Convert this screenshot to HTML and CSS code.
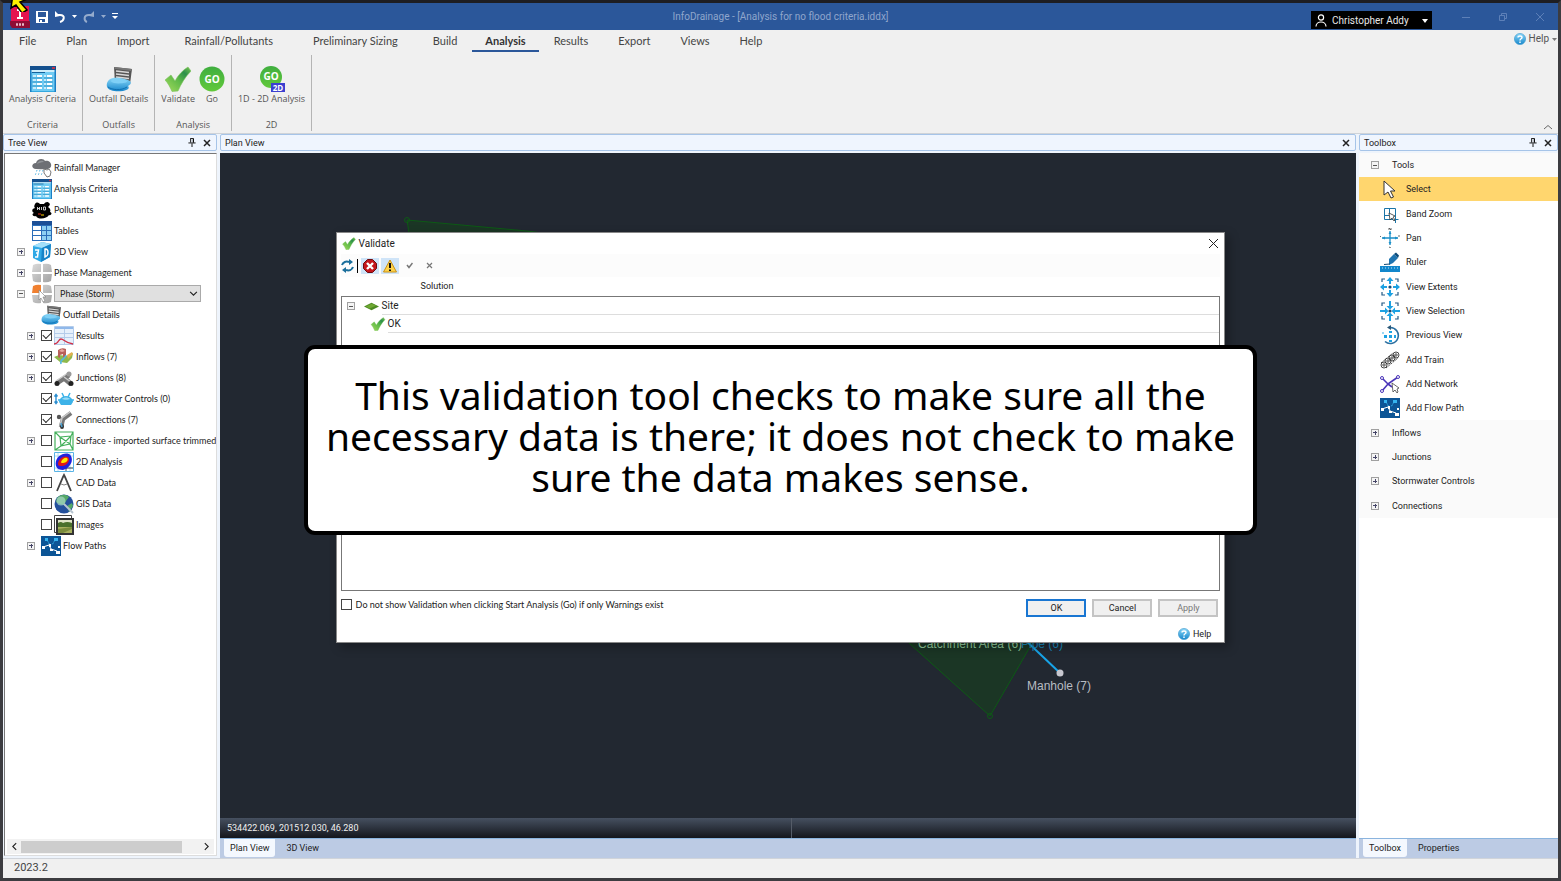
FILE: index.html
```
<!DOCTYPE html>
<html lang="en">
<head>
<meta charset="utf-8">
<title>InfoDrainage - [Analysis for no flood criteria.iddx]</title>
<link rel="stylesheet" href="styles.css">
</head>
<body>
<svg class="defs" aria-hidden="true">
  <defs>
    <linearGradient id="gCheck" x1="0" y1="1" x2="1" y2="0"><stop offset="0" stop-color="#a4dc5c"/><stop offset=".5" stop-color="#5cb848"/><stop offset=".75" stop-color="#2c8f4a"/><stop offset="1" stop-color="#7cc850"/></linearGradient>
    <linearGradient id="gGo" x1="0" y1="0" x2="0" y2="1"><stop offset="0" stop-color="#3fae3f"/><stop offset="1" stop-color="#62c93b"/></linearGradient>
    <linearGradient id="gBlue" x1="0" y1="0" x2="0" y2="1"><stop offset="0" stop-color="#8ad7f8"/><stop offset="1" stop-color="#1787cc"/></linearGradient>
    <linearGradient id="gGrey" x1="0" y1="0" x2="1" y2="1"><stop offset="0" stop-color="#dadada"/><stop offset="1" stop-color="#a2a2a2"/></linearGradient>
  </defs>
  <symbol id="i-criteria" viewBox="0 0 26 26"><path fill="#35a9e0" d="M0 0h26v26H0z"/><path fill="#cfeefb" d="M1 4h24v2H1z"/><path fill="#14508e" d="M0 0h26v4H0z"/><path fill="#b8344e" d="M22 1h3v2h-3z"/><path fill="#6fcbf3" d="M1 6h24v19H1z"/><path stroke="#14629c" d="M2 6.500h13"/><path fill="#fff" d="M7 9h5v2H7zm0 4h5v2H7zm0 4h5v2H7zm0 4h5v2H7zM17 9h5v2h-5zm0 4h5v2h-5zm0 4h5v2h-5zm0 4h5v2h-5z"/><path fill="#c8ecfb" d="M3 9h3v2H3zm0 4h3v2H3zm0 4h3v2H3zm0 4h3v2H3zM14 9h2v2h-2zm0 4h2v2h-2zm0 4h2v2h-2zm0 4h2v2h-2z"/><path stroke="#2389bd" stroke-width=".8" d="M2 12h10M2 16h10M2 20h10m2-8h9m-9 4h9m-9 4h9"/><path fill="#1b7fc4" d="M0 4h1.500v22H0zm24.500 0H26v22h-1.500z"/></symbol>
  <symbol id="i-outfall" viewBox="0 0 26 26"><path fill="#555" d="m8 1 18 2-2 15H9z"/><path fill="#777" d="m8 1 18 2-1 2L9 3z"/><path stroke="#d8d8d8" stroke-width="1.500" d="m10 5 13 1.500M10 8l13 1.500M10 11l13 1.500"/><path fill="url(#gBlue)" d="M7 12c4-1 14 1 17 3 2 2 0 4-2 5 2 2 0 4-5 5-7 1-14 0-16-4-1-4 1-8 6-9z"/><path fill="#7fd0f6" d="M8 13c4-1 10 0 13 2 1 2-8 3-13 2-4-1-4-3 0-4z"/><path stroke="#0f6fb0" fill="none" d="M2 21c4 3 13 4 19 0"/></symbol>
  <symbol id="i-check" viewBox="0 0 26 26"><path fill="url(#gCheck)" stroke="#7cc35a" stroke-width=".6" d="M0 14 6 9l4 6C13 9 18 4 23 1l3 4C20 11 16 18 13 25l-6 .5C5 21 3 17 0 14z"/></symbol>
  <symbol id="i-rain" viewBox="0 0 20 20"><path fill="#6d6f74" d="M4 11c-5 0-5-6 0-6 1-5 8-5 9-2 5-1 8 4 5 7-2 2-8 1-14 1z"/><path fill="#909398" d="M5 6c1-4 6-4 7-2-3 0-5 1-7 2z"/><path stroke="#58b4e0" stroke-dasharray="1.500 2" d="m5 12-2 6m5-6-2 6m5-6-2 6"/><path fill="#fff" stroke="#777" d="m12 11 3 1 2-1 2 3-1 4-3 1-3-4z"/></symbol>
  <symbol id="i-bug" viewBox="0 0 20 20"><path d="M3 4c2-3 4-1 5 0h4c1-2 4-3 5-1 2 1 0 3-1 4 2 1 3 3 2 5 3 1 1 4-1 3-2 4-11 5-13 1-3 1-5-2-2-3-2-1-3-4 1-5-1-1-1-2 0-4z"/><path stroke="#ddd" stroke-width=".9" fill="none" d="M5.500 7v3m2-3v3m-2-1.500h2m2-1.500v3m2-3h2v3h-2z"/><path stroke="#e03020" d="M6 14h3"/><path stroke="#ffd000" d="M9 15h3"/></symbol>
  <symbol id="i-table" viewBox="0 0 20 20"><path fill="#2a6db8" d="M0 0h20v20H0z"/><path fill="#1c4f96" d="M0 0h20v4H0z"/><path fill="#fff" d="M1 5h8v4H1zm0 5h8v4H1zm0 5h8v4H1z"/><path fill="#8ecff2" d="M10 5h4v4h-4zm5 0h4v4h-4zm-5 5h4v4h-4zm5 0h4v4h-4zm-5 5h4v4h-4zm5 0h4v4h-4z"/></symbol>
  <symbol id="i-3d" viewBox="0 0 20 20"><path fill="#2fa9e6" d="m1 4 9-4 9 2-1 13-9 5-8-4z"/><path fill="#a4e0fa" d="m1 4 9-4 9 2-9 4z"/><path fill="#1784c8" d="m10 6 9-4-1 13-9 5z"/><path stroke="#fff" stroke-width="1.500" fill="none" d="M3 8h3.500L6 11H4h2l-.5 4H3m10-8v8c4-1 4-9 0-8z"/></symbol>
  <symbol id="i-phase" viewBox="0 0 20 20"><path fill="url(#gGrey)" d="M1 2q4-2 8-1v8H0zm10-1q5-1 8 1l1 7h-9zM0 11h9v8q-5 1-8-1zm11 0h9l-1 7q-4 2-8 1z"/></symbol>
  <symbol id="i-phase-on" viewBox="0 0 20 20"><path fill="url(#gGrey)" d="M11 1q5-1 8 1l1 7h-9zM0 11h9v8q-5 1-8-1zm11 0h9l-1 7q-4 2-8 1z"/><path fill="#f08030" d="M1 2q4-2 8-1v8H0z"/><path fill="#fff" stroke="#888" stroke-width=".7" d="M7 6v10l2-2 2 4 2-1-2-4h3z"/></symbol>
  <symbol id="i-results" viewBox="0 0 20 20"><path fill="#e6f0fb" stroke="#b4ccea" d="M.5.500h19v18H.500z"/><path fill="#8fb8ea" d="M1 1h18v2H1z"/><path stroke="#b4ccea" d="M1 7.500h18M1 11.500h18M10.500 3v15"/><path stroke="#d03048" stroke-width="1.300" fill="none" d="M0 18c5 0 4-5 7-5s4 4 12 5"/></symbol>
  <symbol id="i-inflows" viewBox="0 0 20 20"><path fill="#8fb84c" d="m0 10 5-2 8 1 6-3-1 5-5 5-7-1z"/><path fill="#e0b050" d="m13 8 5-3 1 2-5 5z"/><path fill="#b8605a" d="M4 3q4-3 8-1v8l-3 1V7L6 8v3l-2-1z"/><path fill="#e9a7a0" d="m5 4 3-2 3 2-3 1z"/><path stroke="#58b8e0" stroke-width="1.600" fill="none" d="M7 17q-1-3 2-5t3-4"/></symbol>
  <symbol id="i-junction" viewBox="0 0 20 20"><path stroke="#777" stroke-width="5" d="m3 15 12-8M9 9l8 7"/><path stroke="#ccc" stroke-width="1.500" d="m2 13 12-8m-4 4 7 5"/><circle cx="3" cy="15.500" r="2.500" fill="#222"/><circle cx="17" cy="15.500" r="2.500" fill="#222"/><circle cx="15" cy="6" r="2.500" fill="#999"/></symbol>
  <symbol id="i-storm" viewBox="0 0 20 20"><path stroke="#2b8ed0" stroke-width="1.400" d="M2 6v8M.500 7.500 2 5.500l1.500 2M.500 12.500l1.500 2 1.500-2" fill="none"/><path fill="#3db2e8" d="M5 13c0-3 3-6 7-6s7 3 7 6l-2 3H7z"/><path fill="#9bdcf6" d="M8 10c2-2 6-2 8 0-2 1-6 1-8 0z"/><path stroke="#3db2e8" stroke-width="1.500" d="m8 4 2 4m6-4-2 4M4 11h3m10 0h3"/></symbol>
  <symbol id="i-connection" viewBox="0 0 20 20"><path stroke="#777" stroke-width="4.500" fill="none" d="m7 17 2-8 8-6"/><path stroke="#c8c8c8" stroke-width="1.500" fill="none" d="m6 16 2-8 8-6"/><circle cx="5" cy="7" r="2.200" fill="#555"/><ellipse cx="8" cy="16.500" rx="2" ry="2.500" fill="#333"/><path stroke="#4aa0d0" stroke-width="1.500" d="m7 13 1 4"/></symbol>
  <symbol id="i-surface" viewBox="0 0 20 20"><path fill="#fff" stroke="#45b05c" stroke-width="1.200" d="M1 1h18v18H1zM1 1l5 5 1 9-6 4M6 6l11-1 2-4M7 15l9-2 3 6M17 5l-1 8M6 6l10 7M7 15 17 5"/></symbol>
  <symbol id="i-2d" viewBox="0 0 20 20"><path fill="#fff" stroke="#59b4e6" d="M.5.500h19v19H.500z"/><path stroke="#9fd0ee" stroke-width=".8" d="M4 1v18M1 4h18M16 1v18M1 16h18"/><path stroke="#222" stroke-width=".8" d="M12 12v7m0-3h7"/><path fill="#2121dd" d="M2 14C0 6 8 0 15 2c6 4 2 14-6 16-3 0-6-1-7-4z"/><path fill="#e01818" d="M4 12c0-5 6-9 10-7 3 3-1 9-6 9-2 0-4 0-4-2z"/><path fill="#ffe800" d="M7 10c1-3 4-5 6-4 2 2-1 5-4 5-1 0-2 0-2-1z"/></symbol>
  <symbol id="i-cad" viewBox="0 0 20 20"><path stroke="#444" stroke-width="1.800" fill="none" d="M3 18 9 4l1-2 1 2 6 14"/><path stroke="#777" stroke-width=".9" d="m7 11 3 1 3-1" fill="none"/></symbol>
  <symbol id="i-gis" viewBox="0 0 20 20"><circle cx="10" cy="10" r="9.500" fill="#24509c"/><path fill="#55a868" d="M3 4c4-4 9-4 12-1l-3 4-2 4-4-1-4-2zM13 12l5-3 1 3-4 6z"/><circle cx="7" cy="7" r="4.500" fill="#a9d8c8" opacity=".7"/><path stroke="#b5c3cf" stroke-width="2" d="m10 10 9 9"/></symbol>
  <symbol id="i-images" viewBox="0 0 20 20"><path fill="#fff" stroke="#444" d="M.500.500h17v17H.500z"/><path fill="#333" d="M2 3h18v17H2z"/><path fill="#dfe4c8" d="M4 5h14v13H4z"/><path fill="#49702c" d="M4 8q3-2 5 0 4-2 9 0v4H4z"/><path fill="#a8b060" d="M4 12h14v6H4z"/><path fill="#7a8c3c" d="m4 14 14-2v2l-9 4H4z"/></symbol>
  <symbol id="i-flow" viewBox="0 0 20 20"><path fill="#0c5596" d="M0 0h20v20H0z"/><path fill="#35b4f0" d="M4 2h3v3H4zm9 0h4v3h-4z"/><path stroke="#35b4f0" stroke-dasharray="2 1" d="m6 4 3 5m5-5-3 5"/><path stroke="#fff" fill="none" d="m2 11 6-2 2 4 6 2"/><path fill="#fff" d="M1 10h3v3H1zm7-2h2v3H8zm1 5h3v2H9zm6 2h4v3h-4zm2-5h2v2h-2z"/></symbol>
  <symbol id="i-select" viewBox="0 0 20 20"><path fill="#fff" stroke="#333" d="M4 2v14l4-3 3 6 2.500-1-3-6H15z"/></symbol>
  <symbol id="i-band" viewBox="0 0 20 20"><path fill="none" stroke="#1b75a8" d="M4.500 4.500h11v11h-11zM9.500 4.500v7h-5"/><path stroke="#1b75a8" d="M15.500 12v7m-3-3.500h6"/><path fill="#fff" stroke="#333" stroke-width=".8" d="m9 9 1 7 2-2 2 3 1-1-2-3 2-1z"/></symbol>
  <symbol id="i-pan" viewBox="0 0 20 20"><path stroke="#1b8fc8" stroke-width="1.300" d="M2 10h16M10 3v14" fill="none"/><path fill="#1b8fc8" d="m2 10 3-1.500v3zm16 0-3-1.500v3zM10 3.500 8.500 6h3zm0 13L8.500 14h3z"/><path stroke="#444" stroke-width=".8" fill="none" d="M9 2V0l2 2V0M9 19l2 1M0 8l1 1m17-1h2"/></symbol>
  <symbol id="i-ruler" viewBox="0 0 20 20"><path fill="#1287cc" d="M0 14h20v6H0z"/><path stroke="#bde5f9" d="M2 16h16" stroke-dasharray="1 2"/><path fill="#1f74b0" d="m9 7 5-5 4 4-5 5-4 2z"/><path fill="#0e4a78" d="m14 2 2-1.500 3 3L18 6z"/><path stroke="#134a73" d="m4 12.500 6-.5"/></symbol>
  <symbol id="i-extents" viewBox="0 0 20 20"><path fill="none" stroke="#245a86" stroke-width="1.200" d="M2 5V2h3m10 0h3v3m0 10v3h-3M5 18H2v-3"/><path fill="#1da1e2" d="m0 10 4-3.500v2.500h3v2H4v2.500zm20 0-4-3.500v2.500h-3v2h3v2.500zM10 0 6.500 4H9v3h2V4h2.500zm0 20-3.500-4H9v-3h2v3h2.500z"/><circle cx="10" cy="10" r="1.600" fill="#174d78"/></symbol>
  <symbol id="i-selection" viewBox="0 0 20 20"><path fill="none" stroke="#245a86" stroke-width="1.200" d="M2 5V2h3m10 0h3v3m0 10v3h-3M5 18H2v-3"/><path fill="#1da1e2" d="M8.500 10 5 6.500V9H0v2h5v2.500zm3 0L15 6.500V9h5v2h-5v2.500zM10 8.500 6.500 5H9V0h2v5h2.500zm0 3L6.500 15H9v5h2v-5h2.500z"/><circle cx="10" cy="10" r="1.600" fill="#174d78"/></symbol>
  <symbol id="i-previous" viewBox="0 0 20 20"><path fill="none" stroke="#2b6fa0" stroke-width="1.600" d="M10 2.500a8 8 0 1 1-5 14"/><path fill="#2b5878" d="m7 2.500 4-2.500v5z"/><path fill="#1da1e2" d="M9 6h3v2H9zm0 4h3v3H9zm0 5h3v2H9zM4 10h3v3H4zm10 0h2v3h-2z"/><path fill="#9bd7f4" d="M2 7h2v2H2z"/></symbol>
  <symbol id="i-train" viewBox="0 0 20 20"><g fill="none" stroke="#333" stroke-width=".9"><circle cx="4" cy="15" r="3"/><circle cx="4" cy="15" r="1.200"/><circle cx="8" cy="11" r="3"/><circle cx="8" cy="11" r="1.200"/><circle cx="12" cy="8" r="3"/><circle cx="12" cy="8" r="1.200"/><circle cx="16" cy="5" r="3"/><circle cx="16" cy="5" r="1.200"/><path stroke-dasharray="2 1" d="m6 18 12-10M1 13 13 3"/></g></symbol>
  <symbol id="i-network" viewBox="0 0 20 20"><path stroke="#4a35b8" stroke-width="1.600" fill="none" d="m2 4 6 6 10-7M8 10l-6 7m6-7 4 3"/><g fill="#fff" stroke="#4a35b8"><circle cx="2" cy="4" r="1.500"/><circle cx="2" cy="17" r="1.500"/><circle cx="18" cy="3" r="1.500"/></g><path fill="#fff" stroke="#444" stroke-width=".8" d="m12 9 1 9 2-2 2 3 1-1-1-3 2-1z"/></symbol>
  <symbol id="i-pin" viewBox="0 0 8 10"><path stroke="#000" fill="none" d="M2.500 1v4m3-4v4M2 .500h4M0 5.500h8M4 6v4"/><path d="M5 1h1v4H5z"/></symbol>
  <symbol id="i-x" viewBox="0 0 8 8"><path stroke="currentColor" stroke-width="1.500" d="m1 1 6 6m0-6L1 7"/></symbol>
  <symbol id="i-chev" viewBox="0 0 8 8"><path stroke="currentColor" fill="none" d="m1 2.500 3 3 3-3"/></symbol>
  <symbol id="i-help" viewBox="0 0 12 12"><circle cx="6" cy="6" r="5.600" fill="url(#gBlue)" stroke="#3a98cc" stroke-width=".6"/><path stroke="#fff" stroke-width="1.400" fill="none" d="M4 4.500c0-2 4-2 4 0C8 6 6 5.500 6 7.500M6 8.500V10"/></symbol>
</svg>

<div class="app">
  <header class="titlebar">
    <div class="quick">
      <svg class="logo" viewBox="0 0 20 22"><path fill="#e5134f" d="M1 0h18v16H1z"/><path fill="#8f0d35" d="M0 15h20v7H2l-2-3z"/><path fill="#fff" d="M7 3h6v2h-2v6h2v2H7v-2h2V5H7z"/><path stroke="#e8b8c6" stroke-width="2.500" stroke-dasharray="2 1" d="M6 18.500h8"/></svg>
      <button aria-label="Save"><svg width="12" height="12" viewBox="0 0 12 12"><path fill="#fff" d="M0 0h12v12H0z"/><path fill="#2b579a" d="M2 1h8v5H2zM3 8h6v3H3z"/><path fill="#fff" d="M4 9h2v2H4z"/></svg></button>
      <button aria-label="Undo"><svg width="12" height="12" viewBox="0 0 12 12"><path stroke="#fff" stroke-width="2" fill="none" d="M3 4h3c6 0 4 6 0 7"/><path fill="#fff" d="M1 6V0l5 5z"/></svg></button>
      <button aria-label="Undo list"><svg width="5" height="4" viewBox="0 0 5 4"><path fill="#fff" d="M0 0h5L2.500 3z"/></svg></button>
      <button aria-label="Redo" class="dim"><svg width="12" height="12" viewBox="0 0 12 12"><path stroke="#fff" stroke-width="2" fill="none" d="M9 4H6C0 4 1 10 4 11"/><path fill="#fff" d="M11 6V0L6 5z"/></svg></button>
      <button aria-label="Redo list" class="dim"><svg width="5" height="4" viewBox="0 0 5 4"><path fill="#fff" d="M0 0h5L2.500 3z"/></svg></button>
      <button aria-label="Customize toolbar"><svg width="6" height="7" viewBox="0 0 6 7"><path fill="#fff" d="M0 0h6v1H0zm0 3h6L3 6z"/></svg></button>
    </div>
    <h1>InfoDrainage - [Analysis for no flood criteria.iddx]</h1>
    <div class="window-side">
      <button class="user"><svg width="12" height="13" viewBox="0 0 12 13"><g fill="none" stroke="#fff" stroke-width="1.200"><circle cx="6" cy="3.500" r="2.600"/><path d="M1 12.500C1 6.500 11 6.500 11 12.500"/></g></svg><span>Christopher Addy</span><svg width="6" height="4" viewBox="0 0 6 4"><path fill="#fff" d="M0 0h6L3 4z"/></svg></button>
      <div class="winbtns">
        <button aria-label="Minimize"><svg width="10" height="10" viewBox="0 0 10 10"><path stroke="#5d80b8" d="M1 5.500h8"/></svg></button>
        <button aria-label="Restore"><svg width="10" height="10" viewBox="0 0 10 10"><path stroke="#5d80b8" fill="none" d="M1.500 3.500h5v5h-5zM3.500 3V1.500h5v5H7"/></svg></button>
        <button aria-label="Close"><svg width="10" height="10" viewBox="0 0 10 10"><path stroke="#5d80b8" d="m1 1 8 8m0-8L1 9"/></svg></button>
      </div>
    </div>
  </header>

  <div class="menurow">
    <nav class="menu">
      <button>File</button><button>Plan</button><button>Import</button><button class="wide">Rainfall/Pollutants</button><button class="wide">Preliminary Sizing</button><button>Build</button><button class="active">Analysis</button><button>Results</button><button>Export</button><button>Views</button><button>Help</button>
    </nav>
    <button class="help"><svg width="12" height="12"><use href="#i-help"/></svg>Help<svg width="5" height="3" viewBox="0 0 5 3"><path fill="#777" d="M0 0h5L2.500 3z"/></svg></button>
  </div>

  <section class="ribbon">
    <div class="group"><div class="tools"><button><svg><use href="#i-criteria"/></svg>Analysis Criteria</button></div><h2>Criteria</h2></div>
    <div class="group"><div class="tools"><button><svg><use href="#i-outfall"/></svg>Outfall Details</button></div><h2>Outfalls</h2></div>
    <div class="group"><div class="tools"><button><svg><use href="#i-check"/></svg>Validate</button><button><svg viewBox="0 0 26 26"><circle cx="13" cy="13" r="12.500" fill="url(#gGo)"/><text x="13" y="17" class="glyph-go">GO</text></svg>Go</button></div><h2>Analysis</h2></div>
    <div class="group"><div class="tools"><button><svg viewBox="0 0 26 26"><circle cx="12" cy="11" r="11" fill="url(#gGo)"/><text x="12" y="14" class="glyph-go">GO</text><path fill="#3b3fd0" d="M12 17h14v9H12z"/><text x="19" y="25" class="glyph-2d">2D</text></svg>1D - 2D Analysis</button></div><h2>2D</h2></div>
    <button class="collapse" aria-label="Collapse ribbon"><svg width="10" height="6" viewBox="0 0 10 6"><path stroke="#666" fill="none" d="m1 5 4-3.500L9 5"/></svg></button>
  </section>

  <main class="work">
    <section class="panel tree-panel">
      <header class="panel-head"><h2>Tree View</h2><button aria-label="Pin"><svg width="8" height="9"><use href="#i-pin"/></svg></button><button aria-label="Close"><svg width="8" height="8"><use href="#i-x"/></svg></button></header>
      <div class="tree-body">
        <ul class="tree">
          <li><i class="exp none"></i><svg><use href="#i-rain"/></svg>Rainfall Manager</li>
          <li><i class="exp none"></i><svg><use href="#i-criteria"/></svg>Analysis Criteria</li>
          <li><i class="exp none"></i><svg><use href="#i-bug"/></svg>Pollutants</li>
          <li><i class="exp none"></i><svg><use href="#i-table"/></svg>Tables</li>
          <li><i class="exp plus"></i><svg><use href="#i-3d"/></svg>3D View</li>
          <li><i class="exp plus"></i><svg><use href="#i-phase"/></svg>Phase Management</li>
          <li><i class="exp"></i><svg><use href="#i-phase-on"/></svg><span class="combo"><select aria-label="Phase"><option>Phase (Storm)</option></select><svg><use href="#i-chev"/></svg></span></li>
          <li class="sub"><i class="exp none"></i><svg><use href="#i-outfall"/></svg>Outfall Details</li>
          <li class="sub"><i class="exp plus"></i><label><input type="checkbox" checked><svg><use href="#i-results"/></svg>Results</label></li>
          <li class="sub"><i class="exp plus"></i><label><input type="checkbox" checked><svg><use href="#i-inflows"/></svg>Inflows (7)</label></li>
          <li class="sub"><i class="exp plus"></i><label><input type="checkbox" checked><svg><use href="#i-junction"/></svg>Junctions (8)</label></li>
          <li class="sub"><i class="exp none"></i><label><input type="checkbox" checked><svg><use href="#i-storm"/></svg>Stormwater Controls (0)</label></li>
          <li class="sub"><i class="exp none"></i><label><input type="checkbox" checked><svg><use href="#i-connection"/></svg>Connections (7)</label></li>
          <li class="sub"><i class="exp plus"></i><label><input type="checkbox"><svg><use href="#i-surface"/></svg>Surface - imported surface trimmed</label></li>
          <li class="sub"><i class="exp none"></i><label><input type="checkbox"><svg><use href="#i-2d"/></svg>2D Analysis</label></li>
          <li class="sub"><i class="exp plus"></i><label><input type="checkbox"><svg><use href="#i-cad"/></svg>CAD Data</label></li>
          <li class="sub"><i class="exp none"></i><label><input type="checkbox"><svg><use href="#i-gis"/></svg>GIS Data</label></li>
          <li class="sub"><i class="exp none"></i><label><input type="checkbox"><svg><use href="#i-images"/></svg>Images</label></li>
          <li class="sub"><i class="exp plus"></i><svg><use href="#i-flow"/></svg>Flow Paths</li>
        </ul>
        <div class="hscroll"><svg class="left"><use href="#i-chev"/></svg><div class="track"><div class="thumb"></div></div><svg class="right"><use href="#i-chev"/></svg></div>
      </div>
    </section>

    <section class="panel plan-panel">
      <header class="panel-head"><h2>Plan View</h2><button aria-label="Close"><svg width="8" height="8"><use href="#i-x"/></svg></button></header>
      <div class="canvas">
        <svg viewBox="0 0 1136 665" preserveAspectRatio="xMinYMin slice">
          <path fill="#1b3625" stroke="#0d5a15" d="m187 67 120 11 300 40-400 80z"/>
          <circle cx="187" cy="67" r="2.500" fill="none" stroke="#0d5a15"/>
          <path fill="#1b3625" stroke="#0d5a15" d="m670 473 100 90 44-76 30-60z"/>
          <circle cx="770" cy="563" r="2.500" fill="none" stroke="#0d5a15"/>
          <path stroke="#18a4e8" stroke-width="2" d="m800 482 40 38"/>
          <circle cx="840" cy="520" r="3.500" fill="#c8c8d0"/>
          <text x="698" y="495" class="lbl-area">Catchment Area (6)</text>
          <text x="801" y="495" class="lbl-pipe">Pipe (6)</text>
          <text x="807" y="537" class="lbl-node">Manhole (7)</text>
        </svg>
      </div>
      <div class="coords"><span>534422.069, 201512.030, 46.280</span></div>
      <div class="doctabs"><button class="active">Plan View</button><button>3D View</button></div>
    </section>

    <section class="panel toolbox-panel">
      <header class="panel-head"><h2>Toolbox</h2><button aria-label="Pin"><svg width="8" height="9"><use href="#i-pin"/></svg></button><button aria-label="Close"><svg width="8" height="8"><use href="#i-x"/></svg></button></header>
      <ul class="toolbox">
        <li class="cat"><button><i class="exp"></i>Tools</button></li>
        <li class="on"><button><svg><use href="#i-select"/></svg>Select</button></li>
        <li><button><svg><use href="#i-band"/></svg>Band Zoom</button></li>
        <li><button><svg><use href="#i-pan"/></svg>Pan</button></li>
        <li><button><svg><use href="#i-ruler"/></svg>Ruler</button></li>
        <li><button><svg><use href="#i-extents"/></svg>View Extents</button></li>
        <li><button><svg><use href="#i-selection"/></svg>View Selection</button></li>
        <li><button><svg><use href="#i-previous"/></svg>Previous View</button></li>
        <li><button><svg><use href="#i-train"/></svg>Add Train</button></li>
        <li><button><svg><use href="#i-network"/></svg>Add Network</button></li>
        <li><button><svg><use href="#i-flow"/></svg>Add Flow Path</button></li>
        <li class="cat"><button><i class="exp plus"></i>Inflows</button></li>
        <li class="cat"><button><i class="exp plus"></i>Junctions</button></li>
        <li class="cat"><button><i class="exp plus"></i>Stormwater Controls</button></li>
        <li class="cat"><button><i class="exp plus"></i>Connections</button></li>
      </ul>
      <div class="doctabs"><button class="active">Toolbox</button><button>Properties</button></div>
    </section>
  </main>

  <footer class="status">2023.2</footer>
</div>

<div class="overlay">
  <div class="dialog" role="dialog" aria-labelledby="dlg-title">
    <header><svg><use href="#i-check"/></svg><h2 id="dlg-title">Validate</h2><button aria-label="Close"><svg width="9" height="9" viewBox="0 0 9 9"><path stroke="#222" d="m0 0 9 9m0-9L0 9"/></svg></button></header>
    <div class="dlg-tools">
      <button aria-label="Refresh"><svg width="13" height="14" viewBox="0 0 13 14"><g fill="none" stroke="#1b6f9c" stroke-width="2"><path d="M1 6c1-3 4-4 7-3M12 8c-1 3-4 4-7 3"/></g><path fill="#1b6f9c" d="m8 0 4 3-4 3zM5 14l-4-3 4-3z"/></svg></button>
      <span class="bar"></span>
      <button class="lit" aria-label="Errors"><svg width="14" height="14" viewBox="0 0 14 14"><path fill="#c4161c" stroke="#6e0c10" d="M4.500.500h5l4 4v5l-4 4h-5l-4-4v-5z"/><path stroke="#fff" stroke-width="2.400" d="m4 4 6 6m0-6-6 6"/></svg></button>
      <button class="lit" aria-label="Warnings"><svg width="14" height="14" viewBox="0 0 14 14"><path fill="#ffd34a" stroke="#c89018" stroke-linejoin="round" d="m7 1 6.500 12H.500z"/><path stroke="#111" stroke-width="2" d="M7 4v5m0 1.500v1.500"/></svg></button>
      <button aria-label="Accept"><svg width="7" height="7" viewBox="0 0 7 7"><path stroke="#777" stroke-width="1.500" fill="none" d="m1 3 2 2.500L6.500 1"/></svg></button>
      <button aria-label="Reject"><svg width="7" height="7" viewBox="0 0 7 7"><path stroke="#777" stroke-width="1.200" d="m1 1 5 5m0-5L1 6"/></svg></button>
    </div>
    <div class="col-head">Solution</div>
    <ul class="solutions">
      <li><i class="exp"></i><svg class="site" viewBox="0 0 16 8"><path fill="#4c8a22" d="M0 4 8 0l8 4-8 4z"/><path fill="#6fa832" d="m2 4 6-3 5 2-7 3z"/></svg><span>Site</span></li>
      <li class="child"><svg class="tick"><use href="#i-check"/></svg><span>OK</span></li>
    </ul>
    <div class="dlg-foot">
      <label><input type="checkbox">Do not show Validation when clicking Start Analysis (Go) if only Warnings exist</label>
      <div class="actions"><button class="primary">OK</button><button>Cancel</button><button disabled>Apply</button></div>
    </div>
    <button class="dlg-help"><svg width="12" height="12"><use href="#i-help"/></svg>Help</button>
  </div>
</div>
<div class="overlay">
  <p class="callout">This validation tool checks to make sure all the necessary data is there; it does not check to make sure the data makes sense.</p>
</div>
<svg class="pointer" width="26" height="12" viewBox="0 0 26 12"><path fill="#fff200" stroke="#000" stroke-width="1.500" d="M11-6 9 8l5-3 6 8 5-3-7-8 5-2z"/></svg>
</body>
</html>
```
FILE: styles.css
```
* { box-sizing: border-box; }
html, body { height: 100%; margin: 0; }
body { font-family: Roboto, "Noto Sans", sans-serif; font-size: 9px; line-height: 12px; color: #222; overflow: hidden; }
button { font: inherit; color: inherit; background: none; border: 0; padding: 0; display: flex; align-items: center; white-space: nowrap; }
h1, h2, p, ul { margin: 0; padding: 0; font-size: inherit; font-weight: normal; list-style: none; }
svg { display: block; flex: none; }
.defs { position: absolute; width: 0; height: 0; }
.app { height: 100vh; display: flex; flex-direction: column; border: 3px solid #3c3c40; border-top-color: #1e1e22; background: #f0f0f0; }

.glyph-go { font: bold 10px "Open Sans", sans-serif; fill: #fff; text-anchor: middle; }
.glyph-2d { font: bold 8px "Open Sans", sans-serif; fill: #fff; text-anchor: middle; }

.titlebar { height: 27px; flex: none; background: #2b579a; display: grid; grid-template-columns: 1fr auto 1fr; align-items: center; }
.titlebar h1 { font-size: 10px; color: #8fa6cc; }
.quick { display: flex; align-items: center; gap: 6px; padding-left: 7px; }
.quick .logo { width: 20px; height: 22px; }
.dim { opacity: .5; }
.window-side { display: flex; justify-content: flex-end; align-items: center; }
.user { background: #000; color: #e8e8e8; height: 18px; width: 121px; padding: 2px 4px 0; gap: 5px; font-size: 10px; margin-top: 6px; }
.user span { flex: 1; text-align: left; }
.winbtns { display: flex; gap: 27px; padding: 0 13px 0 29px; }

.menurow { height: 25px; flex: none; display: flex; justify-content: space-between; align-items: flex-start; }
.menu { display: flex; padding-left: 1px; font-family: Lato, "Noto Sans", sans-serif; font-size: 11px; color: #444; }
.menu button { height: 22px; padding: 2px 15px 0; border-bottom: 2px solid transparent; }
.menu .wide { padding: 2px 20px 0; }
.menu .active { font-weight: bold; padding: 2px 13px 0; color: #333; border-bottom-color: #2b579a; }
.help { color: #555; font-size: 10px; gap: 3px; padding: 3px 1px 0 0; }

.ribbon { height: 79px; flex: none; display: flex; border-bottom: 1px solid #cfd3d8; color: #555; font-family: "Open Sans", sans-serif; }
.group { display: flex; flex-direction: column; justify-content: space-between; align-items: center; border-right: 1px solid #b4b4b4; padding: 11px 6px 0; height: 76px; }
.tools { display: flex; gap: 4px; }
.tools button { flex-direction: column; gap: 1px; }
.tools svg { width: 26px; height: 26px; }
.collapse { margin-left: auto; align-self: flex-end; padding: 0 5px 3px; }

.work { flex: 1; min-height: 0; display: grid; grid-template-columns: 214px 1fr 199px; column-gap: 3px; background: #eef4fc; }
.panel { display: flex; flex-direction: column; min-width: 0; min-height: 0; }
.panel-head { height: 17px; margin: 0 0 2px; flex: none; display: flex; align-items: center; gap: 7px; padding: 0 5px 0 4px; border: 1px solid #a6c4e8; border-radius: 2px; background: #eff5fe; }
.panel-head h2 { flex: 1; }
.tree-body { flex: 1; min-height: 0; display: flex; flex-direction: column; justify-content: space-between; background: #fff; border: 1px solid #777; border-right-color: #ddd; border-bottom-color: #ddd; margin: 0 0 2px 1px; overflow: hidden; }
.tree { padding-top: 3px; font-family: Lato, "Noto Sans", sans-serif; }
.tree li { height: 21px; display: flex; align-items: center; gap: 2px; padding-left: 12px; white-space: nowrap; }
.tree li.sub { padding-left: 22px; }
.tree li > svg, .tree label > svg { width: 20px; height: 20px; }
.tree label { display: flex; align-items: center; gap: 2px; }
.exp { width: 8px; height: 8px; flex: none; border: 1px solid #a0a0a0; background: linear-gradient(#555, #555) center / 4px 1px no-repeat, #f4f4f4; }
.exp.plus { background: linear-gradient(#446, #446) center / 4px 1px no-repeat, linear-gradient(#446, #446) center / 1px 4px no-repeat, #f4f4f4; }
.exp.none { visibility: hidden; }
.tree .exp { margin-right: 5px; }
.tree .sub .exp { margin-right: 4px; }
input[type="checkbox"] { appearance: none; width: 11px; height: 11px; margin: 0; flex: none; border: 1px solid #444; background: #fff; display: grid; place-items: center; }
input[type="checkbox"]:checked::after { content: ""; width: 7px; height: 4px; border: solid #222; border-width: 0 0 1px 1px; transform: rotate(-45deg); margin-bottom: 2px; }
.combo { display: grid; width: 147px; align-items: center; }
.combo select, .combo svg { grid-area: 1 / 1; }
.combo select { appearance: none; height: 17px; font: inherit; color: inherit; border: 1px solid #aaa; border-radius: 0; background: #e0e0e0; padding: 0 5px; }
.combo svg { width: 9px; height: 9px; justify-self: end; margin-right: 3px; pointer-events: none; }
.hscroll { height: 15px; display: flex; align-items: center; gap: 2px; padding: 0 3px; background: #f2f2f2; margin: 0 2px 1px; }
.hscroll svg { width: 9px; height: 9px; }
.hscroll .left { transform: rotate(90deg); }
.hscroll .right { transform: rotate(-90deg); }
.track { flex: 1; }
.thumb { width: 90%; height: 12px; background: #cdcdcd; }

.canvas { flex: 1; min-height: 0; background: #222831; overflow: hidden; }
.canvas svg { width: 100%; height: 100%; }
.canvas text { font: 12px "Liberation Sans", Arial, sans-serif; }
.lbl-area { fill: #8fc79a; }
.lbl-pipe { fill: #1b86b8; }
.lbl-node { fill: #b8bcc2; }
.coords { height: 20px; flex: none; display: flex; align-items: center; padding-left: 7px; color: #f0f0f0; background: linear-gradient(#465060, #14161c); }
.coords span { flex: 0 0 50%; border-right: 1px solid #555c68; line-height: 20px; }
.doctabs { height: 20px; flex: none; display: flex; align-items: flex-start; gap: 5px; background: #bccbe4; border-top: 1px solid #8bb4de; padding-left: 4px; }
.doctabs button { height: 18px; padding: 0 6px; border-radius: 0 0 3px 3px; }
.doctabs .active { background: #f4f8fe; }

.toolbox { flex: 1; background: #fff; }
.toolbox li { height: 24px; }
.toolbox li:nth-child(3n) { height: 25px; }
.toolbox button { width: 100%; height: 100%; padding-left: 21px; gap: 6px; }
.toolbox svg { width: 20px; height: 20px; }
.toolbox .cat { background: #fafafa; }
.toolbox .cat button { padding-left: 12px; gap: 13px; }
.toolbox .on { background: #ffd66e; }

.status { height: 20px; flex: none; border-top: 1px solid #d0d4da; padding: 3px 11px; font-size: 11px; color: #444; }

.overlay { position: absolute; inset: 0; display: grid; place-items: center; pointer-events: none; }
.dialog { pointer-events: auto; width: 57vw; height: 411px; margin-bottom: 6px; background: #fff; border: 1px solid #888; box-shadow: 4px 4px 10px rgba(0, 0, 0, .3); display: flex; flex-direction: column; padding: 0 4px; }
.dialog header { height: 21px; display: flex; align-items: center; gap: 3px; padding: 0 2px 0 1px; }
.dialog header h2 { flex: 1; font-size: 10px; }
.dialog header > svg { width: 14px; height: 13px; }
.dlg-tools { height: 23px; display: flex; align-items: center; gap: 2px; background: #fcfcfc; }
.dlg-tools button { width: 18px; height: 16px; justify-content: center; }
.dlg-tools button:first-child { width: 13px; }
.dlg-tools .lit { background: #cfe4f8; }
.dlg-tools .bar { width: 1px; height: 14px; background: #000; margin: 0 1px; }
.col-head { height: 19px; padding: 3px 80px 0; }
.solutions { flex: 1; border: 1px solid #777; }
.solutions li { height: 18px; display: flex; align-items: center; padding-left: 5px; }
.solutions .exp { margin-right: 9px; }
.solutions .site { width: 15px; height: 9px; margin-right: 3px; }
.solutions .tick { width: 16px; height: 14px; margin-right: 2px; }
.solutions .child { padding-left: 28px; }
.solutions span { flex: 1; line-height: 17px; border-bottom: 1px solid #ddd; font-size: 10px; }
.dlg-foot { display: flex; justify-content: space-between; padding: 8px 2px 8px 0; }
.dlg-foot label { display: flex; align-items: center; gap: 4px; height: 11px; font-family: Lato, sans-serif; }
.actions { display: flex; gap: 6px; }
.actions button { width: 60px; height: 18px; justify-content: center; background: #f0f0f0; border: 2px solid #c4c4c4; }
.actions .primary { border-color: #1976d2; }
.actions button:disabled { color: #777; }
.dlg-help { align-self: flex-end; gap: 3px; height: 17px; padding: 0 9px 0 0; font-size: 9px; }
.callout { width: 61vw; height: 190px; margin-bottom: 2px; border: 4px solid #000; border-radius: 11px; background: #fff; color: #000; font: 39px/41px "Noto Sans", sans-serif; text-align: center; padding: 25px 4px; }
.pointer { position: absolute; top: 0; left: 2px; }
```
